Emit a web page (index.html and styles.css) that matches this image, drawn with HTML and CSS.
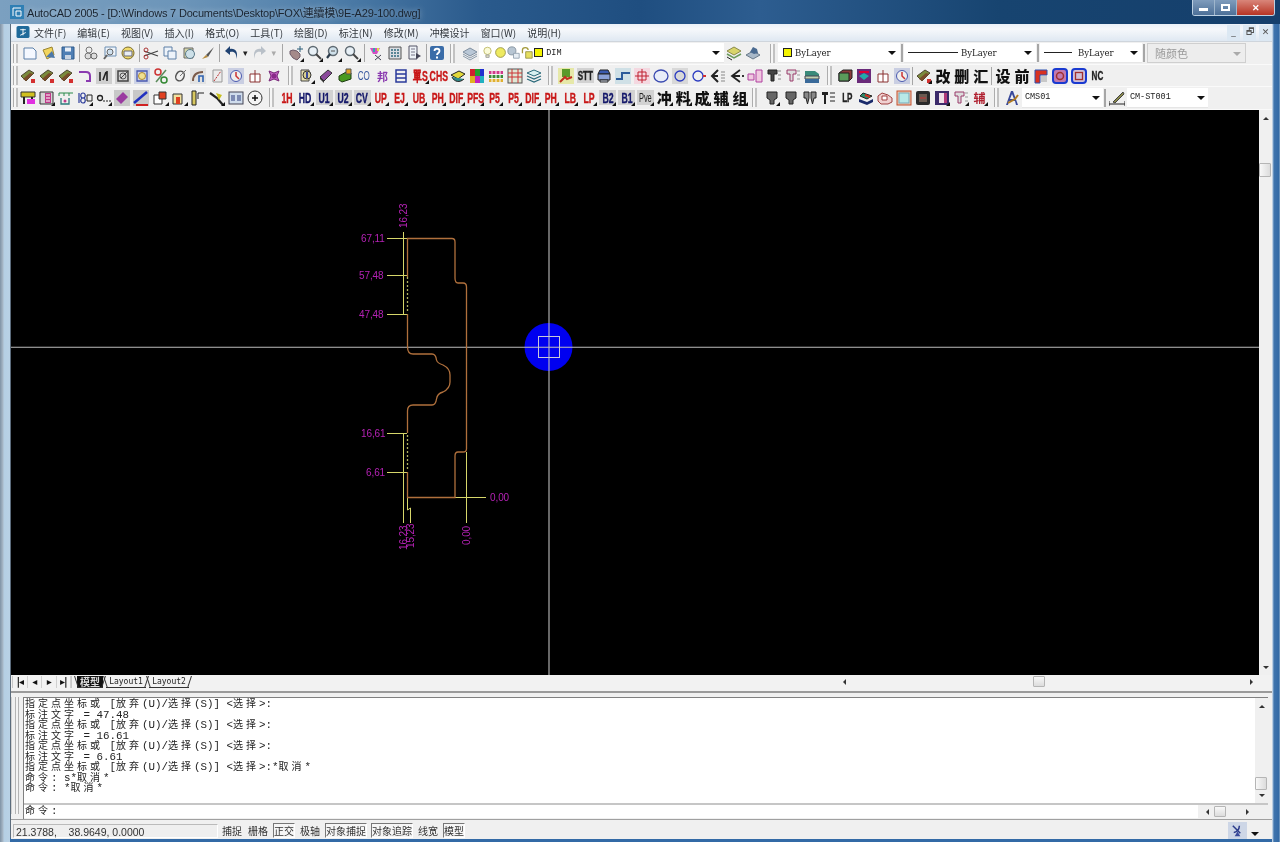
FILE: index.html
```html
<!DOCTYPE html>
<html lang="zh">
<head>
<meta charset="utf-8">
<title>AutoCAD 2005</title>
<link rel="stylesheet" href="styles.css">
</head>
<body>
<svg class="sprite" aria-hidden="true">
<symbol id="new" viewBox="0 0 16 16"><path d="M2 3h9l3 3v8H2z" fill="#f4f8ff" stroke="#5b7fa8"/></symbol>
<symbol id="open" viewBox="0 0 16 16"><path d="M2 5l9-3 2 8-7 4z" fill="#f2d55c" stroke="#9a8430"/><path d="M5 12l6-6 3 7z" fill="#4d78a8"/></symbol>
<symbol id="save" viewBox="0 0 16 16"><path d="M2 2h12v12H2z" fill="#4f7fb4" stroke="#2f5a8c"/><path d="M5 2.500h6v4H5z" fill="#e8eef6"/><path d="M5 10h6v4H5z" fill="#c9d4e2"/></symbol>
<symbol id="print" viewBox="0 0 16 16"><circle cx="6" cy="5" r="3" fill="#eee" stroke="#777"/><circle cx="5" cy="11" r="3" fill="#ddd" stroke="#777"/><circle cx="11" cy="11" r="3" fill="#ddd" stroke="#666"/></symbol>
<symbol id="prev" viewBox="0 0 16 16"><path d="M3 2h11v9H3z" fill="#eef4fb" stroke="#6d8fb3"/><circle cx="8" cy="7" r="3" fill="#cfe0ee" stroke="#666"/><path d="M5 10l-3 4" stroke="#666" stroke-width="2"/></symbol>
<symbol id="plot" viewBox="0 0 16 16"><circle cx="8" cy="8" r="6" fill="#f0da6a" stroke="#7a6b2c"/><path d="M4 6h8v5H4z" fill="#e9eef5" stroke="#667"/></symbol>
<symbol id="cut" viewBox="0 0 16 16"><path d="M1 6l14 5M1 11l14-5" stroke="#444" stroke-width="1.200"/><circle cx="3" cy="5" r="2" fill="none" stroke="#a33"/><circle cx="3" cy="12" r="2" fill="none" stroke="#a33"/></symbol>
<symbol id="copy" viewBox="0 0 16 16"><path d="M2 2h8v9H2z" fill="#edf3fa" stroke="#5c7ea6"/><path d="M6 6h8v8H6z" fill="#edf3fa" stroke="#5c7ea6"/></symbol>
<symbol id="paste" viewBox="0 0 16 16"><path d="M3 3h9v10H3z" fill="#d6d7a8" stroke="#666"/><circle cx="9" cy="9" r="4.500" fill="#cde0e8" stroke="#5a7a8a"/></symbol>
<symbol id="brush" viewBox="0 0 16 16"><path d="M14 2L6 10l2 2z" fill="#555"/><path d="M6 10l-4 4 6-2z" fill="#b58a3a"/></symbol>
<symbol id="undo" viewBox="0 0 16 16"><path d="M13 14c1-6-2-8-6-7L7 10 2 6l5-5v3c5-1 9 3 6 10z" fill="#1f4272"/></symbol>
<symbol id="redo" viewBox="0 0 16 16"><path d="M3 14C2 8 5 6 9 7v3l5-4-5-5v3C4 3 0 7 3 14z" fill="#b9c0c8"/></symbol>
<symbol id="pan" viewBox="0 0 16 16"><path d="M2 6l3-1 4 1 3 3v3l-3 3-4-2-3-4z" fill="#a58a8a" stroke="#6d5a68"/><path d="M12 1v6M9 4h6" stroke="#2c5f7a"/></symbol>
<symbol id="zoom" viewBox="0 0 16 16"><circle cx="6" cy="6" r="4.500" fill="#e8f0f6" stroke="#5f6a72" stroke-width="1.500"/><path d="M9 9l5 5" stroke="#444" stroke-width="2"/></symbol>
<symbol id="zooms" viewBox="0 0 16 16"><circle cx="8" cy="6" r="4.500" fill="#cfe0ea" stroke="#5f6a72" stroke-width="1.500"/><path d="M5 9l-3 4" stroke="#2a3a4a" stroke-width="2.200"/><path d="M6 6h4" stroke="#555"/></symbol>
<symbol id="match" viewBox="0 0 16 16"><path d="M2 3h10l-3 6H5z" fill="#d44fc0"/><path d="M5 3h2v4H5z" fill="#3aa"/><path d="M9 3h2v3H9z" fill="#dd4"/><path d="M7 10l6 5M13 10l-6 5" stroke="#445"/></symbol>
<symbol id="palette" viewBox="0 0 16 16"><path d="M2 2h12v12H2z" fill="#d9dde2" stroke="#555"/><path d="M4 5h2M7 5h2M10 5h2M4 8h2M7 8h2M10 8h2M4 11h2M7 11h2M10 11h2" stroke="#2e6a7d" stroke-width="1.500"/></symbol>
<symbol id="doc" viewBox="0 0 16 16"><path d="M3 1h8v13H3z" fill="#eef2f7" stroke="#556"/><path d="M5 4h4M5 7h4M5 10h4" stroke="#778"/><path d="M10 8l5 3-5 3z" fill="#445"/></symbol>
<symbol id="help" viewBox="0 0 16 16"><rect x="1" y="1" width="14" height="14" rx="2" fill="#3a6ca8"/><path d="M5.500 6c0-3 5-3 5 0 0 2-2.500 2-2.500 4" fill="none" stroke="#fff" stroke-width="1.800"/><path d="M7 11.500h2V13.500H7z" fill="#fff"/></symbol>
<symbol id="layers" viewBox="0 0 16 16"><path d="M8 3l7 4-7 4-7-4z" fill="#b9c7d6" stroke="#7f8fa0"/><path d="M1 9l7 4 7-4M1 11l7 4 7-4" fill="none" stroke="#8a9aaa"/></symbol>
<symbol id="bulb" viewBox="0 0 16 16"><circle cx="8" cy="6" r="4.500" fill="#fbfbd8" stroke="#b7b35a"/><path d="M6 11h4v3H6z" fill="#e0e0c0" stroke="#999"/></symbol>
<symbol id="sun" viewBox="0 0 16 16"><circle cx="8" cy="8" r="6" fill="#eeea60" stroke="#8f8a3a"/></symbol>
<symbol id="gear" viewBox="0 0 16 16"><circle cx="6" cy="6" r="5" fill="#b7c5d2" stroke="#7f8d9a"/><path d="M8 9h7v6H8z" fill="#e6edf3" stroke="#8a9aaa"/></symbol>
<symbol id="lock" viewBox="0 0 16 16"><path d="M3 9V5c0-4 7-4 7 0" fill="none" stroke="#a39a3a" stroke-width="1.600"/><path d="M7 7h8v8H7z" fill="#e6df60" stroke="#8f8a3a"/></symbol>
<symbol id="lay2" viewBox="0 0 16 16"><path d="M8 2l7 4-7 4-7-4z" fill="#d8d46a" stroke="#8a8a4a"/><path d="M1 9l7 4 7-4" fill="none" stroke="#6a9a5a" stroke-width="1.500"/><path d="M1 12l5 3" stroke="#222"/></symbol>
<symbol id="lay3" viewBox="0 0 16 16"><path d="M8 6l7 4-7 4-7-4z" fill="#a8b8c8" stroke="#6a7a8a"/><path d="M5 7l3-5 4 2 1 4-4 1z" fill="#4a6a90"/></symbol>
<symbol id="brick" viewBox="0 0 16 16"><path d="M1 8l8-6 5 3-8 8z" fill="#7b8a3c" stroke="#4f4630"/><path d="M3 11l7-6 3 1-7 7z" fill="#7a4c2a"/><path d="M11 11h4v4h-4z" fill="#d43030"/></symbol>
<symbol id="hook" viewBox="0 0 16 16"><path d="M2 4h7c3 0 4 2 4 4v5H9" fill="none" stroke="#8a3ab0" stroke-width="2"/></symbol>
<symbol id="box11" viewBox="0 0 16 16"><rect width="16" height="16" fill="#cfcfcf"/><path d="M4 4v9M11 3v10M7 12l3-8" stroke="#222" stroke-width="1.600"/></symbol>
<symbol id="boxc" viewBox="0 0 16 16"><rect width="16" height="16" fill="#d2d2d2"/><path d="M3 3h10v10H3z" fill="none" stroke="#444" stroke-width="1.500"/><path d="M6 10l7-7" stroke="#444"/><circle cx="8" cy="8" r="3" fill="none" stroke="#555"/></symbol>
<symbol id="boxb" viewBox="0 0 16 16"><rect width="16" height="16" fill="#cdd3e6"/><path d="M3 3h10v10H3z" fill="none" stroke="#4a5ab0" stroke-width="1.300"/><circle cx="8" cy="8" r="3.500" fill="#f0e090" stroke="#b08a30"/></symbol>
<symbol id="link" viewBox="0 0 16 16"><circle cx="5" cy="4" r="3" fill="none" stroke="#c33" stroke-width="1.500"/><circle cx="11" cy="12" r="3" fill="none" stroke="#383" stroke-width="1.500"/><path d="M3 14L13 2" stroke="#5a8a5a" stroke-width="1.500"/></symbol>
<symbol id="key" viewBox="0 0 16 16"><ellipse cx="8" cy="8" rx="4" ry="5" fill="none" stroke="#555" stroke-width="1.500" transform="rotate(30 8 8)"/><path d="M8 8l6-6" stroke="#777"/></symbol>
<symbol id="arc" viewBox="0 0 16 16"><rect width="16" height="16" fill="#e2e2e2"/><path d="M3 13c0-6 4-9 10-9" fill="none" stroke="#7a5a4a" stroke-width="2"/><path d="M9 14V8h4v6" fill="none" stroke="#2f62b0" stroke-width="1.600"/></symbol>
<symbol id="dash" viewBox="0 0 16 16"><path d="M4 2h9v12H4z" fill="#ececec" stroke="#999"/><path d="M5 13L12 3" stroke="#b33" stroke-dasharray="2 1"/></symbol>
<symbol id="boxr" viewBox="0 0 16 16"><rect width="16" height="16" fill="#c9cee2"/><circle cx="8" cy="8" r="5.500" fill="#eee" stroke="#4a5ab0"/><path d="M8 4v4l3 3" stroke="#c33" stroke-width="1.500" fill="none"/></symbol>
<symbol id="sq" viewBox="0 0 16 16"><path d="M3 6h10v8H3z" fill="#fff" stroke="#8a3030"/><path d="M8 2v12" stroke="#8a3030"/></symbol>
<symbol id="blob" viewBox="0 0 16 16"><path d="M3 3l5 2 5-2-2 5 2 5-5-2-5 2 2-5z" fill="#c060c0" stroke="#7a2a7a"/><circle cx="8" cy="8" r="2.500" fill="#8a2a8a"/></symbol>
<symbol id="cub" viewBox="0 0 16 16"><path d="M2 2h8v11H2z" fill="#e6dfb0" stroke="#444"/><circle cx="8" cy="7" r="4" fill="#d8d090" stroke="#333"/><path d="M8 4v6" stroke="#3a4a9a" stroke-width="2"/></symbol>
<symbol id="purp" viewBox="0 0 16 16"><path d="M2 9l8-7 4 3-8 8z" fill="#8a4a9a" stroke="#333"/><path d="M2 9l4 4v2L2 11z" fill="#333"/></symbol>
<symbol id="grn" viewBox="0 0 16 16"><path d="M2 8l9-5 3 2v6l-9 3-3-2z" fill="#4a9a20" stroke="#1c3c10"/><path d="M9 1h5v5H9z" fill="#e0a020" stroke="#555"/></symbol>
<symbol id="lst" viewBox="0 0 16 16"><path d="M3 2h10v12H3z" fill="none" stroke="#2a3a9a" stroke-width="1.500"/><path d="M3 6h10M3 10h10" stroke="#2a3a9a" stroke-width="1.500"/></symbol>
<symbol id="cap" viewBox="0 0 16 16"><path d="M1 7l8-4 6 3-7 5z" fill="#e2d83a" stroke="#222"/><path d="M2 9c2 5 8 6 12 2" fill="#2f8a8a" stroke="#222"/></symbol>
<symbol id="rgb" viewBox="0 0 16 16"><path d="M1 1h5v7H1z" fill="#d02030"/><path d="M6 1h5v7H6z" fill="#20a030"/><path d="M11 1h4v7h-4z" fill="#2030d0"/><path d="M1 8h5v7H1z" fill="#e0b020"/><path d="M6 8h5v7H6z" fill="#c020c0"/><path d="M11 8h4v7h-4z" fill="#20b0c0"/></symbol>
<symbol id="bars" viewBox="0 0 16 16"><path d="M1 3h14v3H1z" fill="#d03a8a"/><path d="M1 7h14v3H1z" fill="#3a8a3a"/><path d="M1 11h14v3H1z" fill="#e0b030"/><path d="M4 3v11M8 3v11M12 3v11" stroke="#fff"/></symbol>
<symbol id="tbl" viewBox="0 0 16 16"><rect x="1" y="1" width="14" height="14" fill="#dfe7d5" stroke="#555"/><path d="M5 1v14M1 5h14M1 9h14M11 1v14" stroke="#c33"/></symbol>
<symbol id="lay4" viewBox="0 0 16 16"><path d="M8 2l7 3-7 3-7-3z" fill="#d8f0f0" stroke="#2a6a7a"/><path d="M1 8l7 3 7-3M1 11l7 3 7-3" fill="none" stroke="#2a6a7a" stroke-width="1.200"/></symbol>
<symbol id="stamp" viewBox="0 0 16 16"><rect width="16" height="16" fill="#e6e8a8"/><path d="M4 1h8v8H4z" fill="#5a9a2a"/><path d="M2 14l5-5 2 2 5-2" stroke="#c03020" stroke-width="2" fill="none"/></symbol>
<symbol id="plate" viewBox="0 0 16 16"><path d="M4 2h8l2 4H2z" fill="#3a5ab0" stroke="#222"/><path d="M2 6h12v6H2z" fill="#8aa0d8" stroke="#222"/><path d="M4 12h8v2H4z" fill="#d8e0f0" stroke="#222"/></symbol>
<symbol id="wave" viewBox="0 0 16 16"><rect width="16" height="16" fill="#cfe0e6"/><path d="M1 11h6V5h8" fill="none" stroke="#2a5a9a" stroke-width="2"/></symbol>
<symbol id="cross" viewBox="0 0 16 16"><rect width="16" height="16" fill="#f4d8e0"/><path d="M8 1v14M1 8h14M4 4h8v8H4z" fill="none" stroke="#c02030"/></symbol>
<symbol id="oval" viewBox="0 0 16 16"><ellipse cx="8" cy="8" rx="7" ry="6" fill="#e8edf8" stroke="#3a4ab0" stroke-width="1.300"/></symbol>
<symbol id="circ" viewBox="0 0 16 16"><rect width="16" height="16" fill="#d8d8d8"/><circle cx="8" cy="8" r="5" fill="none" stroke="#2a3ac0" stroke-width="1.300"/></symbol>
<symbol id="circd" viewBox="0 0 16 16"><circle cx="7" cy="8" r="5" fill="none" stroke="#2a3ac0" stroke-width="1.300"/><path d="M12 8h3" stroke="#d03030" stroke-width="2"/></symbol>
<symbol id="forka" viewBox="0 0 16 16"><path d="M8 2L2 8l6 6M2 8h6" fill="none" stroke="#222" stroke-width="2"/><path d="M11 4h4M11 7h4M11 10h4M11 13h4" stroke="#888"/></symbol>
<symbol id="forkb" viewBox="0 0 16 16"><path d="M11 2L3 8l8 6M3 8h8" fill="none" stroke="#222" stroke-width="1.800"/><path d="M13 8h2" stroke="#333" stroke-width="2"/></symbol>
<symbol id="pink" viewBox="0 0 16 16"><path d="M1 6h6v6H1zM9 2h6v12H9z" fill="#f0c8e0" stroke="#b040a0"/></symbol>
<symbol id="punch" viewBox="0 0 16 16"><path d="M2 2h9v4H8v7H5V6H2z" fill="#444" stroke="#222"/><path d="M12 3h3M12 7h3M12 11h3" stroke="#888"/></symbol>
<symbol id="punchb" viewBox="0 0 16 16"><path d="M2 2h9v4H8v7H5V6H2z" fill="#ddd" stroke="#9a3a6a"/><path d="M12 3h3M12 7h3M12 11h3" stroke="#999"/></symbol>
<symbol id="stack" viewBox="0 0 16 16"><path d="M1 3h10l4 3v2H1z" fill="#3a8a7a"/><path d="M1 8h14v3H1z" fill="#bfd0b0" stroke="#445"/><path d="M1 11h14v4H1z" fill="#3a6a9a"/></symbol>
<symbol id="cube" viewBox="0 0 16 16"><path d="M2 5l4-3h9v8l-3 3H2z" fill="#8a3a3a" stroke="#222"/><path d="M2 5h10v8H2z" fill="#5a9a5a" stroke="#222"/></symbol>
<symbol id="mag" viewBox="0 0 16 16"><rect x="1" y="1" width="14" height="14" fill="#6a2a7a"/><path d="M3 8l5-3 5 3-5 4z" fill="#2aa"/><path d="M3 3h10v2H3z" fill="#d03"/></symbol>
<symbol id="redc" viewBox="0 0 16 16"><path d="M2 15V2h12v5H7v8z" fill="#d83020" stroke="#2a50b0"/><path d="M8 8h6v6H8z" fill="#c8c8c8"/></symbol>
<symbol id="blue1" viewBox="0 0 16 16"><rect x="1" y="1" width="14" height="14" rx="3" fill="#c07ab0" stroke="#1a3ad0" stroke-width="2"/><circle cx="8" cy="8" r="3.500" fill="none" stroke="#a03030" stroke-width="1.500"/></symbol>
<symbol id="blue2" viewBox="0 0 16 16"><rect x="1" y="1" width="14" height="14" rx="3" fill="#d0c0d8" stroke="#1a3ad0" stroke-width="2"/><rect x="4.500" y="4.500" width="7" height="7" fill="none" stroke="#a03030" stroke-width="1.300"/></symbol>
<symbol id="die1" viewBox="0 0 16 16"><path d="M3 2h10v6l-3 2v4H6v-4L3 8z" fill="#666" stroke="#222"/></symbol>
<symbol id="die2" viewBox="0 0 16 16"><path d="M2 2h5v6L5.500 14 4 8H2zM9 2h5v6h-2L10.500 14 9 8z" fill="#888" stroke="#222"/></symbol>
<symbol id="die3" viewBox="0 0 16 16"><path d="M2 2h6v3H6v9H4V5H2z" fill="#222"/><path d="M10 3h5M10 7h5M10 11h5" stroke="#222"/></symbol>
<symbol id="slab" viewBox="0 0 16 16"><path d="M5 3l9 3-5 3-7-3z" fill="#2a8a6a" stroke="#222"/><path d="M1 9l8 3 6-3v3l-6 3-8-3z" fill="#1a2a6a"/><path d="M7 5l5 2" stroke="#d03020" stroke-width="2"/></symbol>
<symbol id="pill" viewBox="0 0 16 16"><path d="M1 6l4-3 6 2 4 3v4l-4 2H4l-3-3z" fill="#f0d0d0" stroke="#a04040"/><path d="M5 6h5v4H5z" fill="#fff" stroke="#a04040"/></symbol>
<symbol id="scr" viewBox="0 0 16 16"><rect x="1" y="1" width="14" height="14" fill="#f0c8b0" stroke="#c05030"/><rect x="3" y="3" width="10" height="10" fill="#b8e8e8" stroke="#7ab"/></symbol>
<symbol id="dbox" viewBox="0 0 16 16"><rect x="1" y="1" width="14" height="14" rx="2" fill="#2a2a2a"/><rect x="4" y="4" width="8" height="8" fill="#6a5a50"/><path d="M5 8h6" stroke="#c33"/></symbol>
<symbol id="door" viewBox="0 0 16 16"><rect x="1" y="1" width="14" height="14" fill="#3a2a6a"/><path d="M5 3h5v10H5z" fill="#f0e0e8"/><path d="M10 3h3v10h-3z" fill="#b03a7a"/></symbol>
<symbol id="sty" viewBox="0 0 16 16"><path d="M7 1h2l5 14h-2l-1-4H5l-1 4H2z" fill="#3a4a9a"/><path d="M6 9h4l-2-5z" fill="#f0f0f0"/><path d="M4 13l7-4 3-4" stroke="#b07a20" stroke-width="2" fill="none"/></symbol>
<symbol id="dimst" viewBox="0 0 16 16"><path d="M0 14h16M0 11v5M16 11v5" stroke="#222"/><path d="M4 12L14 2l1 2L6 13z" fill="#8a8a4a" stroke="#444"/></symbol>
<symbol id="sat" viewBox="0 0 16 16"><path d="M3 3l8 8M4 10c3 0 6-3 6-7" stroke="#2a3a8a" stroke-width="1.600" fill="none"/><path d="M5 14h6l-3-5z" fill="#3a4a9a"/></symbol>
<symbol id="add" viewBox="0 0 16 16"><circle cx="8" cy="8" r="7" fill="#f4f4f4" stroke="#333"/><path d="M5 8h6M8 5v6" stroke="#111" stroke-width="1.500"/></symbol>
<symbol id="mx" viewBox="0 0 16 16"><path d="M1 2h14v5H1z" fill="#d0c020" stroke="#333"/><path d="M4 7v7M12 7v7" stroke="#222" stroke-width="2"/><path d="M7 9h8v5H7z" fill="#e030e0"/></symbol>
<symbol id="mlst" viewBox="0 0 16 16"><path d="M1 2h13v12H1z" fill="#d5d5d5" stroke="#333"/><path d="M6 3h6v10H6z" fill="#c03a8a"/><path d="M7 5h4M7 8h4M7 11h4" stroke="#fff"/></symbol>
<symbol id="net" viewBox="0 0 16 16"><path d="M1 3h14M1 3v3M6 3v3M11 3v3" stroke="#2a8a4a"/><path d="M3 8v6h8V8" fill="none" stroke="#2a7a7a" stroke-width="1.300"/><circle cx="7" cy="11" r="1.500" fill="#c03a8a"/></symbol>
<symbol id="num" viewBox="0 0 16 16"><path d="M2 3v10M6 3c-3 0-3 5 0 5s3 5 0 5-3-5 0-5 3-5 0-5z" fill="none" stroke="#2a3a9a" stroke-width="1.200"/><path d="M10 5h5v6h-5z" fill="none" stroke="#222"/></symbol>
<symbol id="chain" viewBox="0 0 16 16"><circle cx="4" cy="8" r="2.500" fill="none" stroke="#222" stroke-width="1.300"/><path d="M7 11h2M10 11h2M13 11h2" stroke="#222"/></symbol>
<symbol id="pur2" viewBox="0 0 16 16"><rect width="16" height="16" fill="#c8c8c8"/><path d="M2 9l7-7 5 5-7 7z" fill="#9a3aa0"/></symbol>
<symbol id="line2" viewBox="0 0 16 16"><rect width="16" height="16" fill="#c8c8c8"/><path d="M1 13L14 2" stroke="#2030c0" stroke-width="2.500"/><path d="M3 15h12" stroke="#d02020" stroke-width="2"/></symbol>
<symbol id="fld" viewBox="0 0 16 16"><path d="M2 5h8v9H2z" fill="#fff" stroke="#333"/><path d="M7 2h7v7H7z" fill="#e04020" stroke="#333"/></symbol>
<symbol id="fld2" viewBox="0 0 16 16"><path d="M2 4h9v10H2z" fill="#f0e0a0" stroke="#333"/><path d="M5 7h4v7H5z" fill="#e04020"/></symbol>
<symbol id="trn" viewBox="0 0 16 16"><path d="M2 1h4v14H2z" fill="#d8c860" stroke="#222"/><path d="M8 3h6M8 3v6" stroke="#222"/></symbol>
<symbol id="wand" viewBox="0 0 16 16"><path d="M1 3l7 5 6 7" stroke="#222" stroke-width="2.200" fill="none"/><path d="M7 3l6 2-3 5z" fill="#c8c020"/></symbol>
<symbol id="num2" viewBox="0 0 16 16"><rect x="1" y="2" width="14" height="12" fill="#cfdcec" stroke="#445"/><path d="M4 5v6M6 5v6M10 5v6M12 5v6" stroke="#2a3a7a"/></symbol>
</svg>

<div class="titlebar">
  <svg class="appicon" viewBox="0 0 14 14"><rect width="14" height="14" fill="#2f7fb4"/><path d="M3 3h8M3 3v8M6 6h5v5H6z" fill="none" stroke="#fff"/></svg>
  <span class="title">AutoCAD 2005 - [D:\Windows 7 Documents\Desktop\FOX\連續模\9E-A29-100.dwg]</span>
  <div class="caption">
    <span class="cap cap-min"><i></i></span>
    <span class="cap cap-max"><i></i></span>
    <span class="cap cap-close">✕</span>
  </div>
</div>

<div class="app">
  <div class="menubar">
    <svg class="menuicon" viewBox="0 0 14 14"><rect width="14" height="13" rx="2" fill="#1f6a9a"/><path d="M4 4h6M7 3v7M4 10l6-3" stroke="#fff"/></svg>
    <span>文件(F)</span><span>编辑(E)</span><span>视图(V)</span><span>插入(I)</span><span>格式(O)</span><span>工具(T)</span><span>绘图(D)</span><span>标注(N)</span><span>修改(M)</span><span>冲模设计</span><span>窗口(W)</span><span>说明(H)</span>
    <div class="mdi"><span class="mdib">_</span><span class="mdib">🗗</span><span class="mdib">✕</span></div>
  </div>

  <div class="bar bar1">
    <i class="grip"></i>
    <b class="b"><svg><use href="#new"/></svg></b><b class="b"><svg><use href="#open"/></svg></b><b class="b"><svg><use href="#save"/></svg></b><i class="sep"></i>
    <b class="b"><svg><use href="#print"/></svg></b><b class="b"><svg><use href="#prev"/></svg></b><b class="b"><svg><use href="#plot"/></svg></b><i class="sep"></i>
    <b class="b"><svg><use href="#cut"/></svg></b><b class="b"><svg><use href="#copy"/></svg></b><b class="b"><svg><use href="#paste"/></svg></b><b class="b"><svg><use href="#brush"/></svg></b><i class="sep"></i>
    <b class="b"><svg><use href="#undo"/></svg></b><b class="drop">▾</b><b class="b"><svg><use href="#redo"/></svg></b><b class="drop off">▾</b><i class="sep sep-r"></i>
    <b class="b f"><svg><use href="#pan"/></svg></b><b class="b f"><svg><use href="#zoom"/></svg></b><b class="b f"><svg><use href="#zooms"/></svg></b><b class="b f"><svg><use href="#zoom"/></svg></b><i class="sep sep-q"></i>
    <b class="b"><svg><use href="#match"/></svg></b><b class="b"><svg><use href="#palette"/></svg></b><b class="b"><svg><use href="#doc"/></svg></b><i class="sep sep-w"></i>
    <b class="b"><svg><use href="#help"/></svg></b>
    <i class="grip grip-m"></i>
    <b class="b"><svg><use href="#layers"/></svg></b>
    <div class="combo combo-layer">
      <svg class="ci"><use href="#bulb"/></svg><svg class="ci"><use href="#sun"/></svg><svg class="ci"><use href="#gear"/></svg><svg class="ci"><use href="#lock"/></svg><i class="swatch"></i><span class="ctext">DIM</span><em class="arrow"></em>
    </div>
    <b class="b"><svg><use href="#lay2"/></svg></b><b class="b"><svg><use href="#lay3"/></svg></b>
    <i class="grip grip-l"></i>
    <div class="combo combo-color"><i class="swatch"></i><span class="ctext serif">ByLayer</span><em class="arrow"></em></div><i class="sep sep-t"></i>
    <div class="combo combo-lt"><i class="ln ln-a"></i><span class="ctext serif">ByLayer</span><em class="arrow"></em></div><i class="sep sep-t"></i>
    <div class="combo combo-lw"><i class="ln ln-b"></i><span class="ctext serif">ByLayer</span><em class="arrow"></em></div><i class="sep sep-t"></i>
    <div class="combo combo-pl"><span class="plt">随颜色</span><em class="arrow arrow-off"></em></div>
  </div>

  <div class="bar bar2">
    <i class="grip"></i>
    <b class="b"><svg><use href="#brick"/></svg></b><b class="b"><svg><use href="#brick"/></svg></b><b class="b"><svg><use href="#brick"/></svg></b><b class="b"><svg><use href="#hook"/></svg></b><b class="b"><svg><use href="#box11"/></svg></b><b class="b"><svg><use href="#boxc"/></svg></b><b class="b"><svg><use href="#boxb"/></svg></b><b class="b"><svg><use href="#link"/></svg></b><b class="b"><svg><use href="#key"/></svg></b><b class="b"><svg><use href="#arc"/></svg></b><b class="b"><svg><use href="#dash"/></svg></b><b class="b"><svg><use href="#boxr"/></svg></b><b class="b"><svg><use href="#sq"/></svg></b><b class="b"><svg><use href="#blob"/></svg></b>
    <i class="grip grip-2"></i>
    <b class="b f"><svg><use href="#cub"/></svg></b><b class="b"><svg><use href="#purp"/></svg></b><b class="b"><svg><use href="#grn"/></svg></b><b class="b"><span class="t t-b">CO</span></b><b class="b"><span class="t t-m">邦</span></b><b class="b"><svg><use href="#lst"/></svg></b><b class="b f"><span class="t t-r">單S</span></b><b class="b"><span class="t t-r">CHS</span></b><b class="b"><svg><use href="#cap"/></svg></b><b class="b"><svg><use href="#rgb"/></svg></b><b class="b"><svg><use href="#bars"/></svg></b><b class="b"><svg><use href="#tbl"/></svg></b><b class="b"><svg><use href="#lay4"/></svg></b>
    <i class="grip grip-2"></i>
    <b class="b"><svg><use href="#stamp"/></svg></b><b class="b g"><span class="t t-k">STT</span></b><b class="b"><svg><use href="#plate"/></svg></b><b class="b"><svg><use href="#wave"/></svg></b><b class="b"><svg><use href="#cross"/></svg></b><b class="b"><svg><use href="#oval"/></svg></b><b class="b"><svg><use href="#circ"/></svg></b><b class="b"><svg><use href="#circd"/></svg></b><b class="b"><svg><use href="#forka"/></svg></b><b class="b"><svg><use href="#forkb"/></svg></b><b class="b"><svg><use href="#pink"/></svg></b><b class="b"><svg><use href="#punch"/></svg></b><b class="b"><svg><use href="#punchb"/></svg></b><b class="b"><svg><use href="#stack"/></svg></b>
    <i class="grip grip-2"></i>
    <b class="b"><svg><use href="#cube"/></svg></b><b class="b"><svg><use href="#mag"/></svg></b><b class="b"><svg><use href="#sq"/></svg></b><b class="b"><svg><use href="#boxr"/></svg></b><i class="sep sep-n"></i>
    <b class="b f"><svg><use href="#brick"/></svg></b><b class="b"><span class="t t-z">改</span></b><b class="b"><span class="t t-z">删</span></b><b class="b"><span class="t t-z">汇</span></b><i class="sep sep-n"></i>
    <b class="b"><span class="t t-z">设</span></b><b class="b"><span class="t t-z">前</span></b><b class="b"><svg><use href="#redc"/></svg></b><b class="b"><svg><use href="#blue1"/></svg></b><b class="b"><svg><use href="#blue2"/></svg></b><b class="b"><span class="t t-k">NC</span></b>
  </div>

  <div class="bar bar3">
    <i class="grip"></i>
    <b class="b"><svg><use href="#mx"/></svg></b><b class="b f"><svg><use href="#mlst"/></svg></b><b class="b"><svg><use href="#net"/></svg></b><b class="b f"><svg><use href="#num"/></svg></b><b class="b f"><svg><use href="#chain"/></svg></b><b class="b"><svg><use href="#pur2"/></svg></b><b class="b"><svg><use href="#line2"/></svg></b><b class="b f"><svg><use href="#fld"/></svg></b><b class="b f"><svg><use href="#fld2"/></svg></b><b class="b"><svg><use href="#trn"/></svg></b><b class="b f"><svg><use href="#wand"/></svg></b><b class="b"><svg><use href="#num2"/></svg></b><b class="b"><svg><use href="#add"/></svg></b>
    <i class="grip grip-3"></i>
    <b class="b f"><span class="t t-r">1H</span></b><b class="b f"><span class="t t-n">HD</span></b><b class="b f g"><span class="t t-n">U1</span></b><b class="b f g"><span class="t t-n">U2</span></b><b class="b f g"><span class="t t-n">CV</span></b><b class="b f"><span class="t t-r">UP</span></b><b class="b f"><span class="t t-r">EJ</span></b><b class="b f"><span class="t t-r">UB</span></b><b class="b f"><span class="t t-r">PH</span></b><b class="b f"><span class="t t-r">DIF</span></b><b class="b f"><span class="t t-r">PFS</span></b><b class="b f"><span class="t t-r">P5</span></b><b class="b f"><span class="t t-r">P5</span></b><b class="b f"><span class="t t-r">DIF</span></b><b class="b f"><span class="t t-r">PH</span></b><b class="b f"><span class="t t-r">LB</span></b><b class="b f"><span class="t t-r">LP</span></b><b class="b f g"><span class="t t-n">B2</span></b><b class="b f g"><span class="t t-n">B1</span></b><b class="b f g"><span class="t t-k t-s">Pve</span></b><b class="b f"><span class="t t-z">冲</span></b><b class="b f"><span class="t t-z">料</span></b><b class="b f"><span class="t t-z">成</span></b><b class="b f"><span class="t t-z">辅</span></b><b class="b f"><span class="t t-z">组</span></b>
    <i class="grip grip-4"></i>
    <b class="b f"><svg><use href="#die1"/></svg></b><b class="b"><svg><use href="#die1"/></svg></b><b class="b"><svg><use href="#die2"/></svg></b><b class="b"><svg><use href="#die3"/></svg></b><b class="b"><span class="t t-k">LP</span></b><b class="b"><svg><use href="#slab"/></svg></b><b class="b"><svg><use href="#pill"/></svg></b><b class="b"><svg><use href="#scr"/></svg></b><b class="b"><svg><use href="#dbox"/></svg></b><b class="b f"><svg><use href="#door"/></svg></b><b class="b f"><svg><use href="#punchb"/></svg></b><b class="b f"><span class="t t-d">辅</span></b>
    <i class="grip grip-5"></i>
    <b class="b"><svg><use href="#sty"/></svg></b>
    <div class="combo combo-style"><span class="ctext">CMS01</span><em class="arrow"></em></div><i class="sep sep-t"></i>
    <b class="b b-dim"><svg><use href="#dimst"/></svg></b>
    <div class="combo combo-dim"><span class="ctext">CM-ST001</span><em class="arrow"></em></div>
  </div>

  <div class="work">
    <svg class="canvas" viewBox="11 110 1248 565">
      <circle class="pick" cx="548.500" cy="347" r="24"/>
      <path class="cross" d="M549 110V675M11 347.200H1259"/>
      <rect class="aperture" x="538.500" y="336.500" width="21" height="21"/>
      <path class="ylw" d="M387 238.500H407M387 275.500H407M387 314.500H407M387 433.500H407M387 472.500H407M403.500 232V314.500M403.500 433V523M466.500 452V523M455 497.500H486M407.500 497V510L410.500 508V523"/>
      <path class="ylw dots" d="M407.500 277V312M407.500 435V471"/>
      <path class="org" d="M407.500 314V347C407.500 351 409 354 413 354H432C435 354 436 356 436.500 360C437 363 440 364 443 365C447 367 450 370 450 375V382C450 387 447 390 443 392C439 393 437 395 436.500 399C436 403 435 405 432 405H413C409 405 407.500 407 407.500 411V433M407.500 472V497.500H455V456C455 453 456 452 458 452H463C465 452 466.500 451 466.500 449V287C466.500 284 465 283 463 283H458C456 283 455 281 455 278V242C455 239 454 238.500 452 238.500H407.500V277"/>
      <text class="dim" x="361" y="242">67,11</text>
      <text class="dim" x="359" y="279">57,48</text>
      <text class="dim" x="359" y="318">47,48</text>
      <text class="dim" x="361" y="437">16,61</text>
      <text class="dim" x="366" y="476">6,61</text>
      <text class="dim" x="490" y="501">0,00</text>
      <text class="dim" transform="translate(407 228) rotate(-90)">16,23</text>
      <text class="dim" transform="translate(407 550) rotate(-90)">16,23</text>
      <text class="dim" transform="translate(414 548) rotate(-90)">15,23</text>
      <text class="dim" transform="translate(470 545) rotate(-90)">0,00</text>
    </svg>
    <div class="vscroll vs-main"><em class="up"></em><i class="thumb thumb-main"></i><em class="down"></em></div>
  </div>

  <div class="tabs">
    <div class="nav"><span>|◂</span><span>◂</span><span>▸</span><span>▸|</span></div>
    <span class="tab tab-on">模型</span><span class="tab">Layout1</span><span class="tab">Layout2</span>
    <div class="hscroll hs-main"><em class="lf"></em><i class="thumb thumb-h"></i><em class="rt"></em></div>
  </div>

  <div class="split"></div>

  <div class="cmd">
    <i class="cmdgrip"></i>
    <div class="cmdmain">
      <div class="hist">
        <div class="log">
          <p><span class="c">指定点坐标或</span> [<span class="c">放弃</span>(U)/<span class="c">选择</span>(S)] &lt;<span class="c">选择</span>&gt;:</p>
          <p><span class="c">标注文字</span> = 47.48</p>
          <p><span class="c">指定点坐标或</span> [<span class="c">放弃</span>(U)/<span class="c">选择</span>(S)] &lt;<span class="c">选择</span>&gt;:</p>
          <p><span class="c">标注文字</span> = 16.61</p>
          <p><span class="c">指定点坐标或</span> [<span class="c">放弃</span>(U)/<span class="c">选择</span>(S)] &lt;<span class="c">选择</span>&gt;:</p>
          <p><span class="c">标注文字</span> = 6.61</p>
          <p><span class="c">指定点坐标或</span> [<span class="c">放弃</span>(U)/<span class="c">选择</span>(S)] &lt;<span class="c">选择</span>&gt;:*<span class="c">取消</span>*</p>
          <p><span class="c">命令</span>: s*<span class="c">取消</span>*</p>
          <p><span class="c">命令</span>: *<span class="c">取消</span>*</p>
        </div>
        <div class="vscroll vs-cmd"><em class="up"></em><i class="thumb thumb-cmd"></i><em class="down"></em></div>
      </div>
      <div class="prompt">
        <p class="promptline"><span class="c">命令</span>:</p>
        <div class="hscroll hs-cmd"><em class="lf"></em><i class="thumb thumb-c"></i><em class="rt"></em></div>
      </div>
    </div>
  </div>

  <div class="status">
    <span class="coords">21.3788,    38.9649, 0.0000</span>
    <span class="st">捕捉</span><span class="st">栅格</span><span class="st on">正交</span><span class="st">极轴</span><span class="st on">对象捕捉</span><span class="st on">对象追踪</span><span class="st">线宽</span><span class="st on">模型</span>
    <div class="tray"><span class="trayicon"><svg><use href="#sat"/></svg></span><em class="arrow arrow-tray"></em></div>
  </div>
</div>
</body>
</html>
```

FILE: styles.css
```css
* { box-sizing: border-box; }
html, body { margin: 0; padding: 0; }
body {
  width: 1280px;
  height: 842px;
  overflow: hidden;
  position: relative;
  font-family: "Noto Sans CJK SC", "Liberation Sans", sans-serif;
  background:
    linear-gradient(90deg, #7f93a6 0, #a9b9c8 3px, #b5cfe4 4px, #b9d2e6 10px, transparent 10px, transparent 1272px, #e4edf5 1272px, #3f74ad 1274px, #336aa6 1279px, #9fb9d2 1280px),
    #336aa6;
  filter: blur(.35px);
}
.sprite { display: none; }

.titlebar {
  height: 24px;
  display: flex;
  align-items: center;
  position: relative;
  background: linear-gradient(90deg, #7ba0c0 0, #6c95b9 180px, #4f7ea9 330px, #2a5a8c 480px, #1f4e80 640px, #2d5d90 760px, #174470 1000px, #153f6c 1280px);
}
.appicon { width: 14px; height: 14px; margin: 0 4px 0 10px; flex: none; }
.title {
  font: 11px "Liberation Sans", "Noto Sans CJK TC", sans-serif;
  letter-spacing: -.18px;
  color: #1a2430;
  white-space: nowrap;
  text-shadow: 0 0 6px rgba(255,255,255,.55);
  margin-left: -1px;
  margin-top: -1px;
}
.caption {
  position: absolute;
  top: 0;
  right: 5px;
  height: 16px;
  display: flex;
  border: 1px solid #bcd0e2;
  border-top: 0;
  border-radius: 0 0 3px 3px;
  overflow: hidden;
}
.cap { display: flex; align-items: center; justify-content: center; height: 15px; width: 22px; color: #fff; border-right: 1px solid #9fb6cc; background: linear-gradient(#7f9cbc, #4d7098); }
.cap-close { width: 37px; border: 0; font-size: 9px; font-weight: 700; background: linear-gradient(#d9867a, #b73424); }
.cap-min i { display: block; width: 9px; height: 3px; background: #fff; margin-top: 4px; }
.cap-max i { display: block; width: 9px; height: 7px; border: 2px solid #fff; }

.app {
  width: 1262px;
  height: 814px;
  margin-left: 10px;
  border-left: 1px solid #5c6c7c;
  background: #f0f0f0;
  display: flex;
  flex-direction: column;
}

.menubar {
  height: 18px;
  flex: none;
  display: flex;
  align-items: center;
  gap: 11px;
  padding-left: 5px;
  font-size: 10px;
  color: #33383e;
  background: linear-gradient(#eaf0f8, #f6f8fb 30%, #dfe8f2);
  border-bottom: 1px solid #cfd5dc;
  white-space: nowrap;
}
.menuicon { width: 14px; height: 13px; margin-right: -7px; flex: none; }
.mdi { margin-left: auto; display: flex; gap: 3px; }
.mdib { width: 13px; height: 16px; font-size: 9px; line-height: 15px; text-align: center; color: #555; background: #dce8f3; font-family: "DejaVu Sans", sans-serif; }

.bar { display: flex; align-items: center; flex: none; padding-left: 2px; border-bottom: 1px solid #fafafa; }
.bar1 { height: 23px; }
.bar2 { height: 22px; }
.bar3 { height: 23px; padding-bottom: 1px; }

.grip { flex: none; display: block; width: 5px; height: 19px; border-left: 1px solid #adadad; border-right: 2px solid #c2c2c2; background: #f6f6f6; margin-right: 2px; }
.bar3 .grip:first-child { margin-right: .5px; }
.bar1 .grip:first-child { margin-right: 2.500px; }
.bar2 .grip:first-child { margin-right: 1px; }
.grip-m { margin: 0 5px 0 4px; }
.grip-l { margin: 0 3px 0 8px; }
.grip-2 { margin: 0 4px 0 5px; }
.grip-3 { margin: 0 3px 0 5px; }
.grip-4 { margin: 0 5px 0 3px; }
.grip-5 { margin: 0 4px 0 5px; }

.sep { flex: none; display: block; width: 1px; height: 18px; background: #a6a6a6; margin: 0 1.500px; }
.sep-r { margin: 0 3px 0 4px; }
.sep-q { margin: 0 2px; }
.sep-w { margin: 0 0 0 3px; }
.sep-t { margin: 0 1px; width: 2px; }
.sep-n { margin: 0 1.500px 0 1px; }

.b { flex: none; width: 18.900px; height: 19px; position: relative; display: flex; align-items: center; justify-content: center; }
.b svg { width: 16px; height: 16px; display: block; }
.g::before { content: ""; position: absolute; inset: 2px 1px; background: #d2d2d2; }
.f::after { content: ""; position: absolute; right: 1px; bottom: 1px; border-style: solid; border-width: 0 0 4px 4px; border-color: transparent transparent #111 transparent; }
.b-dim { width: 20px; }
.drop { flex: none; width: 10px; font-size: 9px; font-weight: 400; text-align: center; color: #222; font-family: "DejaVu Sans", sans-serif; }
.drop.off { color: #aaa; width: 9px; }

.t { position: relative; flex: none; font-family: "Liberation Sans", sans-serif; font-weight: 700; font-size: 14px; line-height: 16px; white-space: nowrap; transform: scaleX(.62); -webkit-text-stroke: .4px currentColor; }
.t-r { color: #c81818; }
.t-n { color: #14186a; }
.t-b { color: #3a5aa0; font-weight: 400; font-size: 13px; -webkit-text-stroke: 0; }
.t-m { color: #8a3ab0; font-size: 11px; font-family: "Noto Sans CJK SC", sans-serif; transform: none; -webkit-text-stroke: 0; }
.t-k { color: #222; font-size: 13px; }
.t-s { font-size: 12px; font-weight: 400; -webkit-text-stroke: 0; }
.t-d { color: #b02030; font-size: 12px; font-family: "Noto Sans CJK SC", sans-serif; transform: none; -webkit-text-stroke: 0; }
.t-z { color: #111; font-size: 15px; font-weight: 900; font-family: "Noto Sans CJK TC", sans-serif; transform: none; -webkit-text-stroke: 0; }

.combo { flex: none; height: 20px; display: flex; align-items: center; background: #fff; position: relative; border-bottom: 1px solid #e6e6e6; }
.ci { width: 13px; height: 13px; flex: none; margin-right: 0; }
.combo-layer { width: 245px; padding-left: 2px; margin-left: 0; }
.combo-color { width: 122px; padding-left: 4px; }
.combo-lt { width: 132px; padding-left: 4px; }
.combo-lw { width: 102px; padding-left: 4px; }
.combo-pl { width: 99px; margin-left: 1px; background: #ededed; border: 1px solid #cfcfcf; padding-left: 7px; }
.combo-style { width: 81px; }
.combo-dim { width: 81px; }
.combo-style .arrow, .combo-dim .arrow { right: 3px; }
.swatch { flex: none; width: 9px; height: 9px; background: #f4f400; border: 1px solid #222; margin-left: 1px; }
.ctext { font: 8.500px "Liberation Mono", monospace; color: #222; margin-left: 3px; white-space: pre; }
.serif { font-family: "DejaVu Serif", "Liberation Serif", serif; font-size: 8.500px; }
.ln { flex: none; height: 1px; background: #222; display: block; }
.ln-a { width: 50px; margin-right: 0; }
.ln-b { width: 28px; margin-right: 3px; }
.plt { font-size: 11px; color: #9a9a9a; }
.arrow { position: absolute; right: 4px; top: 8px; width: 0; height: 0; border: 4px solid transparent; border-top-color: #111; border-bottom: 0; }
.arrow-off { border-top-color: #aaa; }
.arrow-tray { right: 13px; top: 10px; }

.work { display: flex; height: 565px; flex: none; }
.canvas { display: block; width: 1248px; height: 565px; flex: none; background: #000; }
.cross { stroke: #bcbcbc; stroke-width: 1.100; fill: none; }
.pick { fill: #0000f0; }
.aperture { fill: none; stroke: #c8c8d8; stroke-width: 1; }
.ylw { fill: none; stroke: #d6d66a; stroke-width: 1; }
.dots { stroke: #b0b060; stroke-dasharray: 2 2; stroke-width: 1.300; }
.org { fill: none; stroke: #b0703c; stroke-width: 1.300; }
.dim { font: 10px "Liberation Sans", sans-serif; fill: #b522b5; letter-spacing: -.1px; }

.vscroll { flex: none; width: 13px; display: flex; flex-direction: column; background: #f0f0f0; position: relative; }
.up, .down { position: absolute; left: 3.500px; width: 0; height: 0; border: 3px solid transparent; }
.up { top: 7px; border-bottom-color: #333; border-top: 0; }
.down { bottom: 6px; border-top-color: #333; border-bottom: 0; }
.thumb { display: block; background: linear-gradient(90deg, #f8f8f8, #dcdcdc); border: 1px solid #b5b5b5; border-radius: 1px; }
.thumb-main { width: 12px; height: 14px; margin: 53px 0 0 0; }
.thumb-cmd { width: 12px; height: 13px; margin: 79px 0 0 0; }

.tabs { height: 13px; flex: none; display: flex; align-items: center; position: relative; background: #f2f2f2; }
.nav { display: flex; width: 60px; height: 12px; margin-left: 1px; flex: none; border: 1px solid #c8c8c8; border-width: 0 1px; }
.nav span { flex: 1; text-align: center; font: 700 10px/11px "DejaVu Sans", sans-serif; color: #111; border-right: 1px solid #d0d0d0; white-space: nowrap; letter-spacing: -1px; }
.tab { flex: none; height: 12px; position: relative; margin-left: 3px; padding: 0 2px; font: 8px/11px "DejaVu Sans Mono", monospace; color: #222; border-bottom: 1px solid #333; width: 40px; text-align: center; }
.tab::after { content: ""; position: absolute; right: -1px; top: 0; height: 12px; border-right: 1px solid #333; transform: skewX(-18deg); }
.tab::before { content: ""; position: absolute; left: -1px; top: 0; height: 12px; border-left: 1px solid #333; transform: skewX(18deg); }
.tab-on { background: #111; color: #ddd; width: 26px; font: 700 10px/12px "Noto Sans CJK SC", sans-serif; margin-left: 5px; }
.hscroll { position: relative; height: 13px; display: flex; align-items: center; }
.hs-main { position: absolute; right: 13px; top: 0; width: 424px; }
.lf, .rt { position: absolute; top: 3.500px; width: 0; height: 0; border: 3px solid transparent; }
.lf { left: 8px; border-right-color: #333; border-left: 0; }
.rt { right: 6px; border-left-color: #333; border-right: 0; }
.thumb-h { width: 12px; height: 11px; margin-left: 198px; background: linear-gradient(#f8f8f8, #dcdcdc); }

.split { height: 9px; flex: none; background: linear-gradient(#f2f2f2 3px, #9a9a9a 3px, #9a9a9a 5px, #f0f0f0 5px); }

.cmd { display: flex; height: 122px; flex: none; }
.cmdgrip { flex: none; display: block; width: 12px; border-left: 1px solid #d0d0d0; background: linear-gradient(90deg, #f0f0f0 3px, #b4b4b4 3px, #b4b4b4 4px, #f4f4f4 4px, #f4f4f4 6px, #b4b4b4 6px, #b4b4b4 7px, #f0f0f0 7px); height: 117px; }
.cmdmain { width: 1245px; display: flex; flex-direction: column; border-top: 1px solid #808080; border-left: 1px solid #808080; }
.hist { display: flex; height: 105px; flex: none; }
.log { flex: 1; background: #fff; padding: 1px 0 0 1px; overflow: hidden; }
.log p, .promptline {
  margin: 0;
  height: 10.500px;
  font: 10.830px/10.500px "Liberation Mono", "Noto Sans CJK SC", monospace;
  color: #222;
  white-space: pre;
}
.c { font-size: 10px; letter-spacing: 3px; }
.vs-cmd { height: 105px; }
.prompt { display: flex; height: 15px; flex: none; border-top: 2px solid #c6c6c6; background: #fff; }
.promptline { flex: 1; padding: 1px 0 0 1px; height: 13px; }
.hs-cmd { width: 70px; background: #f0f0f0; }
.hs-cmd .lf { left: 8px; top: 3.500px; }
.hs-cmd .rt { right: 19px; top: 3.500px; }
.thumb-c { width: 12px; height: 11px; margin-left: 16px; background: linear-gradient(#f8f8f8, #dcdcdc); }

.status { height: 20px; flex: none; display: flex; align-items: center; padding: 2px 0 0 2px; border-top: 1px solid #a0a0a0; position: relative; background: #f0f0f0; }
.coords { flex: none; width: 205px; height: 14px; font: 10.500px/14px "Liberation Sans", sans-serif; color: #333; padding-left: 2px; white-space: pre; border: 1px solid #bbb; border-right-color: #fff; border-bottom-color: #fff; margin-right: 3px; background: #efefef; }
.st { flex: none; height: 15px; padding: 0; margin-right: 4px; font-size: 10px; line-height: 14px; color: #333; border: 1px solid transparent; }
.st.on { border-color: #777 #fff #fff #777; background: #f6f6f6; }
.tray { margin-left: auto; display: flex; width: 44px; height: 18px; position: relative; }
.trayicon { width: 19px; height: 17px; background: #cdd6e6; display: flex; align-items: center; justify-content: center; }
.trayicon svg { width: 15px; height: 15px; }
```
